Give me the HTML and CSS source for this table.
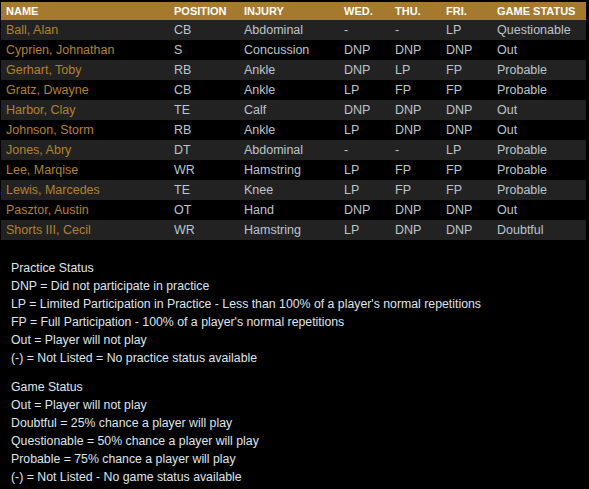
FILE: index.html
```html
<!DOCTYPE html>
<html>
<head>
<meta charset="utf-8">
<link rel="stylesheet" href="styles.css">
</head>
<body>
<div class="page">
<table class="report">
  <colgroup>
    <col class="c-name"><col class="c-pos"><col class="c-inj"><col class="c-day"><col class="c-day"><col class="c-day"><col class="c-status">
  </colgroup>
  <thead>
    <tr><th>NAME</th><th>POSITION</th><th>INJURY</th><th>WED.</th><th>THU.</th><th>FRI.</th><th>GAME STATUS</th></tr>
  </thead>
  <tbody>
    <tr><td class="name">Ball, Alan</td><td>CB</td><td>Abdominal</td><td>-</td><td>-</td><td>LP</td><td>Questionable</td></tr>
    <tr><td class="name">Cyprien, Johnathan</td><td>S</td><td>Concussion</td><td>DNP</td><td>DNP</td><td>DNP</td><td>Out</td></tr>
    <tr><td class="name">Gerhart, Toby</td><td>RB</td><td>Ankle</td><td>DNP</td><td>LP</td><td>FP</td><td>Probable</td></tr>
    <tr><td class="name">Gratz, Dwayne</td><td>CB</td><td>Ankle</td><td>LP</td><td>FP</td><td>FP</td><td>Probable</td></tr>
    <tr><td class="name">Harbor, Clay</td><td>TE</td><td>Calf</td><td>DNP</td><td>DNP</td><td>DNP</td><td>Out</td></tr>
    <tr><td class="name">Johnson, Storm</td><td>RB</td><td>Ankle</td><td>LP</td><td>DNP</td><td>DNP</td><td>Out</td></tr>
    <tr><td class="name">Jones, Abry</td><td>DT</td><td>Abdominal</td><td>-</td><td>-</td><td>LP</td><td>Probable</td></tr>
    <tr><td class="name">Lee, Marqise</td><td>WR</td><td>Hamstring</td><td>LP</td><td>FP</td><td>FP</td><td>Probable</td></tr>
    <tr><td class="name">Lewis, Marcedes</td><td>TE</td><td>Knee</td><td>LP</td><td>FP</td><td>FP</td><td>Probable</td></tr>
    <tr><td class="name">Pasztor, Austin</td><td>OT</td><td>Hand</td><td>DNP</td><td>DNP</td><td>DNP</td><td>Out</td></tr>
    <tr><td class="name">Shorts III, Cecil</td><td>WR</td><td>Hamstring</td><td>LP</td><td>DNP</td><td>DNP</td><td>Doubtful</td></tr>
  </tbody>
</table>
<div class="legend">
  <p>Practice Status<br>DNP = Did not participate in practice<br>LP = Limited Participation in Practice - Less than 100% of a player's normal repetitions<br>FP = Full Participation - 100% of a player's normal repetitions<br>Out = Player will not play<br>(-) = Not Listed = No practice status available</p>
  <p>Game Status<br>Out = Player will not play<br>Doubtful = 25% chance a player will play<br>Questionable = 50% chance a player will play<br>Probable = 75% chance a player will play<br>(-) = Not Listed - No game status available</p>
</div>
</div>
</body>
</html>
```

FILE: styles.css
```css
html, body {
  margin: 0;
  padding: 0;
  background: #000;
}
body {
  font-family: "Liberation Sans", Arial, sans-serif;
}
.page {
  padding: 2px 3px 0 1px;
}
.report {
  width: 585px;
  border-collapse: collapse;
  table-layout: fixed;
}
.c-name { width: 168px; }
.c-pos { width: 70px; }
.c-inj { width: 100px; }
.c-day { width: 51px; }
.c-status { width: 94px; }
.report th {
  background: #a57a2f;
  color: #fff;
  font-size: 11px;
  font-weight: bold;
  text-align: left;
  height: 18px;
  padding: 0 0 0 5px;
  line-height: 18px;
}
.report td {
  color: #bcc4cc;
  font-size: 12.5px;
  height: 20px;
  line-height: 20px;
  padding: 0 0 0 5px;
  white-space: nowrap;
}
.report tbody tr:nth-child(odd) td {
  background: #222;
}
.report td.name {
  color: #b0822f;
}
.legend {
  padding: 19px 0 0 10px;
  color: #dde4ec;
  font-size: 12.3px;
  line-height: 18px;
}
.legend p {
  margin: 0 0 11px;
}
```
